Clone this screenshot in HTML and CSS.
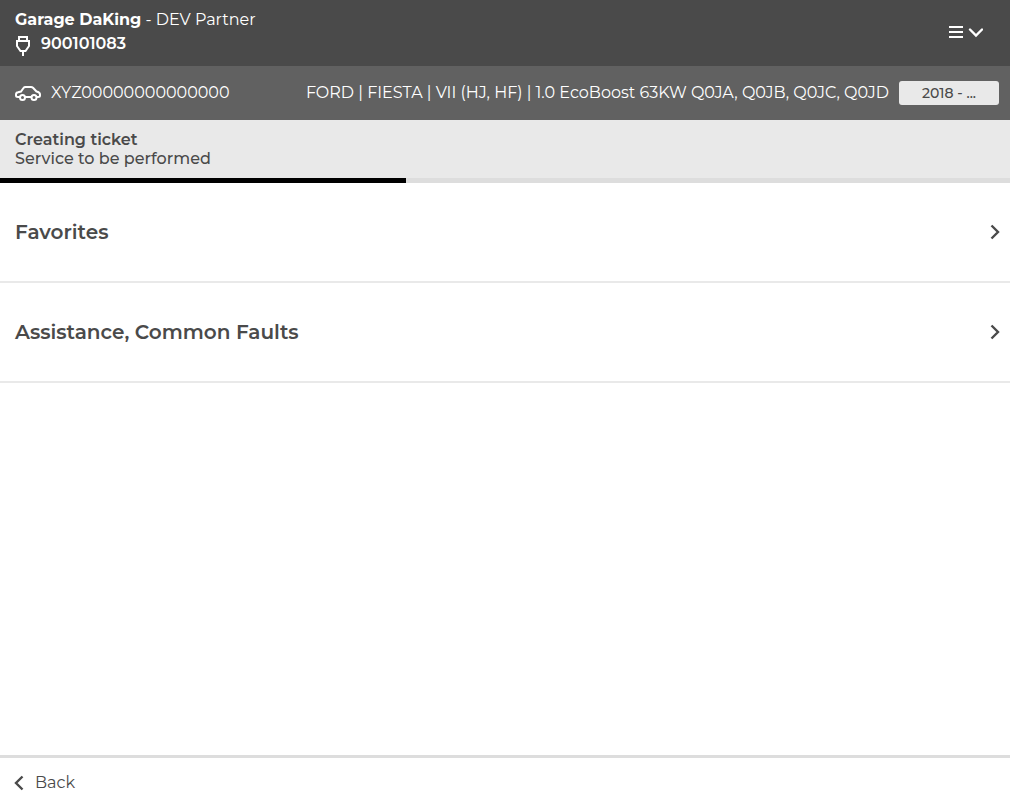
FILE: index.html
```html
<!DOCTYPE html>
<html lang="en">

<head>
    <meta charset="UTF-8">
    <meta name="viewport" content="width=device-width, initial-scale=1.0">
    <title>Creating ticket</title>
    <link rel="stylesheet" href="styles.css">
</head>

<body>
    <header class="header">
        <div class="partner">
            <div class="partner-name"><strong>Garage DaKing</strong> - DEV Partner</div>
            <div class="partner-device">
                <svg class="plug-icon" width="16" height="20" viewBox="0 0 16 20" aria-hidden="true">
                    <path d="M4 5V1h8v4M2 5h12v5l-3.500 5h-5L2 10zM8 15v5" />
                </svg>
                <span>900101083</span>
            </div>
        </div>
        <button class="menu-button" type="button" aria-label="Menu">
            <svg width="34" height="14" viewBox="0 0 34 14" aria-hidden="true">
                <path d="M0 2h14M0 7h14M0 12h14" />
                <path d="M21 4.500l6 6 6-6" stroke-width="2.400" stroke-linecap="round" />
            </svg>
        </button>
    </header>

    <div class="vehicle">
        <svg class="car-icon" width="26" height="16" viewBox="0 0 26 16" aria-hidden="true">
            <path d="M5 12H3Q1 12 1 10.500V9.500Q1 7.500 3 7.200L6 6.500l2.500-3.500Q9.200 2 10.500 2h5.500q1.200 0 2 .8L21.500 6.500Q25 7.200 25 9.500v1Q25 12 23 12h-1.500M10 12h6.500" />
            <circle cx="7.500" cy="12.500" r="2.500" />
            <circle cx="19" cy="12.500" r="2.500" />
        </svg>
        <span class="vin">XYZ00000000000000</span>
        <span class="model">FORD | FIESTA | VII (HJ, HF) | 1.0 EcoBoost 63KW Q0JA, Q0JB, Q0JC, Q0JD</span>
        <button class="year" type="button">2018 - ...</button>
    </div>

    <div class="step">
        <h1>Creating ticket</h1>
        <p>Service to be performed</p>
    </div>
    <div class="progress">
        <div class="progress-bar"></div>
    </div>

    <main class="services">
        <a class="service" href="#favorites">
            <span>Favorites</span>
            <svg class="chevron" width="10" height="16" viewBox="0 0 10 16" aria-hidden="true">
                <path d="M1.500 1.500L8 8l-6.500 6.500" />
            </svg>
        </a>
        <a class="service" href="#assistance">
            <span>Assistance, Common Faults</span>
            <svg class="chevron" width="10" height="16" viewBox="0 0 10 16" aria-hidden="true">
                <path d="M1.500 1.500L8 8l-6.500 6.500" />
            </svg>
        </a>
    </main>

    <footer class="footer">
        <button class="back" type="button">
            <svg class="chevron" width="10" height="16" viewBox="0 0 10 16" aria-hidden="true">
                <path d="M8.500 1.500L2 8l6.500 6.500" />
            </svg>
            <span>Back</span>
        </button>
    </footer>
</body>

</html>
```
FILE: styles.css
```css
* {
    box-sizing: border-box;
}

body {
    display: flex;
    flex-direction: column;
    min-height: 100vh;
    margin: 0;
    background-color: #ffffff;
    color: #4a4a4a;
    font-family: Montserrat, Inter, sans-serif;
    font-size: 16px;
    line-height: 20px;
}

svg {
    display: block;
    flex-shrink: 0;
    fill: none;
    stroke: currentColor;
    stroke-width: 2;
}

.chevron {
    stroke-width: 2.4;
}

button {
    border: none;
    font: inherit;
    cursor: pointer;
}

/* top bar */
.header {
    display: flex;
    justify-content: space-between;
    align-items: center;
    height: 66px;
    padding: 0 27px 2px 15px;
    background-color: #4a4a4a;
    color: #ffffff;
}

.partner-name {
    line-height: 24px;
}

.partner-name strong {
    font-weight: 700;
}

.partner-device {
    display: flex;
    align-items: flex-end;
    gap: 10px;
    font-weight: 600;
    line-height: 24px;
}

.menu-button {
    padding: 0;
    background: none;
    color: inherit;
}

/* vehicle bar */
.vehicle {
    display: flex;
    align-items: center;
    gap: 10px;
    height: 54px;
    padding: 0 11px 0 15px;
    background-color: #616161;
    color: #ffffff;
}

.model {
    margin-left: auto;
    white-space: nowrap;
}

.year {
    width: 100px;
    height: 24px;
    padding: 0;
    border-radius: 3px;
    background-color: #e9e9e9;
    color: #4a4a4a;
    font-size: 14px;
    font-weight: 500;
}

/* current step */
.step {
    padding: 10px 15px;
    background-color: #e9e9e9;
    line-height: 19px;
}

.step h1,
.step p {
    margin: 0;
    font-size: 16px;
    font-weight: 500;
}

.step h1 {
    font-weight: 600;
}

.progress {
    height: 5px;
    background-color: #dddddd;
}

.progress-bar {
    width: 40.2%;
    height: 100%;
    background-color: #000000;
}

/* list of services */
.services {
    flex: 1;
}

.service {
    display: flex;
    justify-content: space-between;
    align-items: center;
    height: 100px;
    padding: 0 10px 0 15px;
    border-bottom: 2px solid #e9e9e9;
    color: #4a4a4a;
    font-size: 20px;
    font-weight: 600;
    text-decoration: none;
}

/* footer */
.footer {
    padding: 15px 14px 8px;
    border-top: 3px solid #dddddd;
}

.back {
    display: flex;
    align-items: center;
    gap: 11px;
    padding: 0;
    background: none;
    color: #4a4a4a;
}
```
